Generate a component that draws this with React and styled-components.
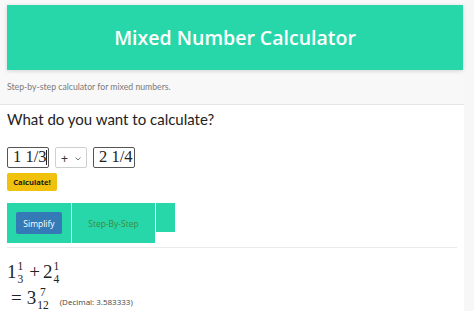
import React from "react";
import styled, { createGlobalStyle } from "styled-components";

const GlobalStyle = createGlobalStyle`
  html, body { margin: 0; padding: 0; }
  body { background: #f7f7f7; font-family: "Open Sans", "Noto Sans", sans-serif; overflow: hidden; }
`;

const Page = styled.div`
  width: 464px;
  height: 100vh;
  display: flex;
  flex-direction: column;
`;

const Top = styled.header`
  background: #f8f8f8;
  padding: 5px 1px 0 7px;
  height: 99px;
  border-bottom: 1px solid #e6e6e6;
  box-sizing: content-box;
  flex: none;
`;

const Banner = styled.div`
  background: #28d7a9;
  height: 65px;
  display: flex;
  align-items: center;
  justify-content: center;
  box-shadow: 0 1px 4px rgba(0, 0, 0, 0.15);
`;

const Title = styled.h1`
  margin: 0;
  color: #fff;
  font-family: "Open Sans", sans-serif;
  font-weight: 600;
  font-size: 19.5px;
`;

const Subtitle = styled.p`
  margin: 11px 0 0;
  color: #7a7a7a;
  font-family: Lato, sans-serif;
  font-size: 8.7px;
  font-weight: 400;
`;

const Main = styled.main`
  flex: 1;
  background: #fff;
  padding: 4px 7px 0;
  overflow: hidden;
`;

const Question = styled.h2`
  margin: 0;
  font-family: Lato, sans-serif;
  font-weight: 400;
  font-size: 15px;
  color: #222;
  line-height: 21px;
`;

const InputRow = styled.div`
  display: flex;
  gap: 6px;
  margin-top: 17px;
  height: 21px;
`;

const NumberBox = styled.div`
  width: 42px;
  box-sizing: border-box;
  border: 1px solid #555;
  border-radius: 2px;
  font-family: "Liberation Serif", serif;
  font-size: 16.5px;
  color: #222;
  display: flex;
  align-items: center;
  padding-left: 5px;
  line-height: 1;
  white-space: nowrap;
  overflow: hidden;
`;

const Caret = styled.span`
  display: inline-block;
  width: 1px;
  height: 15px;
  background: #222;
`;

const OpSelect = styled.div`
  width: 32px;
  box-sizing: border-box;
  border: 1px solid #cfcfcf;
  border-radius: 2px;
  display: flex;
  align-items: center;
  justify-content: space-between;
  padding: 2px 5px 0 5px;
  font-family: "Liberation Sans", sans-serif;
  font-size: 12px;
  color: #333;
`;

const CalcButton = styled.button`
  margin-top: 5px;
  display: block;
  background: #f0c20e;
  border: none;
  border-radius: 2px;
  height: 18px;
  width: 50px;
  padding: 0;
  font-family: "Open Sans", sans-serif;
  font-weight: 700;
  font-size: 7.6px;
  color: #1a1a1a;
`;

const Tabs = styled.div`
  display: flex;
  align-items: flex-start;
  margin-top: 12px;
  padding-bottom: 4px;
  border-bottom: 1px solid #eaeaea;
`;

const Tab = styled.div`
  background: #28d7a9;
  height: ${(p) => p.$h}px;
  width: ${(p) => p.$w}px;
  display: flex;
  align-items: center;
  justify-content: center;
  border-right: ${(p) => (p.$sep ? "1px solid #c9f3e6" : "none")};
  box-sizing: border-box;
  margin-right: ${(p) => p.$mr || 0}px;
`;

const TabLabel = styled.span`
  color: #3d8a3d;
  font-size: 8.5px;
  font-family: "Open Sans", sans-serif;
`;

const BlueButton = styled.button`
  background: #337ab7;
  color: #fff;
  border: none;
  border-radius: 2px;
  width: 46px;
  height: 22px;
  padding: 0;
  font-family: "Open Sans", sans-serif;
  font-size: 8.5px;
`;

const MathBlock = styled.div`
  margin-top: 9px;
  font-family: "Liberation Serif", serif;
  color: #222;
`;

const MathLine = styled.div`
  display: flex;
  align-items: center;
  height: ${(p) => p.$h}px;
  padding-left: ${(p) => p.$pl || 0}px;
`;

const Big = styled.span`
  font-size: 19px;
  line-height: 1;
  margin-right: ${(p) => p.$mr || 0}px;
  margin-left: ${(p) => p.$ml || 0}px;
`;

const Frac = styled.span`
  display: inline-flex;
  flex-direction: column;
  align-items: center;
  font-size: 11.5px;
  line-height: 11px;
  margin: 4px 1px 0;
  gap: 2px;
`;

const Decimal = styled.span`
  font-family: "Open Sans", sans-serif;
  font-size: 8px;
  color: #444;
  margin-left: 10px;
  margin-top: 9px;
`;

const Fraction = ({ n, d }) => (
  <Frac>
    <span>{n}</span>
    <span>{d}</span>
  </Frac>
);

export default function App() {
  return (
    <>
      <GlobalStyle />
      <Page>
        <Top>
          <Banner>
            <Title>Mixed Number Calculator</Title>
          </Banner>
          <Subtitle>Step-by-step calculator for mixed numbers.</Subtitle>
        </Top>
        <Main>
          <Question>What do you want to calculate?</Question>
          <InputRow>
            <NumberBox>
              1 1/3<Caret />
            </NumberBox>
            <OpSelect>
              <span>+</span>
              <svg width="6" height="4" viewBox="0 0 6 4">
                <path d="M0.5 0.5 L3 3 L5.5 0.5" fill="none" stroke="#777" strokeWidth="1" />
              </svg>
            </OpSelect>
            <NumberBox>2 1/4</NumberBox>
          </InputRow>
          <CalcButton>Calculate!</CalcButton>
          <Tabs>
            <Tab $w={65} $h={40} $sep>
              <BlueButton>Simplify</BlueButton>
            </Tab>
            <Tab $w={83} $h={40} $mr={1}>
              <TabLabel>Step-By-Step</TabLabel>
            </Tab>
            <Tab $w={19} $h={29} />
          </Tabs>
          <MathBlock>
            <MathLine $h={28}>
              <Big>1</Big>
              <Fraction n="1" d="3" />
              <Big $ml={5} $mr={3}>+</Big>
              <Big>2</Big>
              <Fraction n="1" d="4" />
            </MathLine>
            <MathLine $h={24} $pl={4}>
              <Big $mr={5}>=</Big>
              <Big>3</Big>
              <Fraction n="7" d="12" />
              <Decimal>(Decimal: 3.583333)</Decimal>
            </MathLine>
          </MathBlock>
        </Main>
      </Page>
    </>
  );
}
